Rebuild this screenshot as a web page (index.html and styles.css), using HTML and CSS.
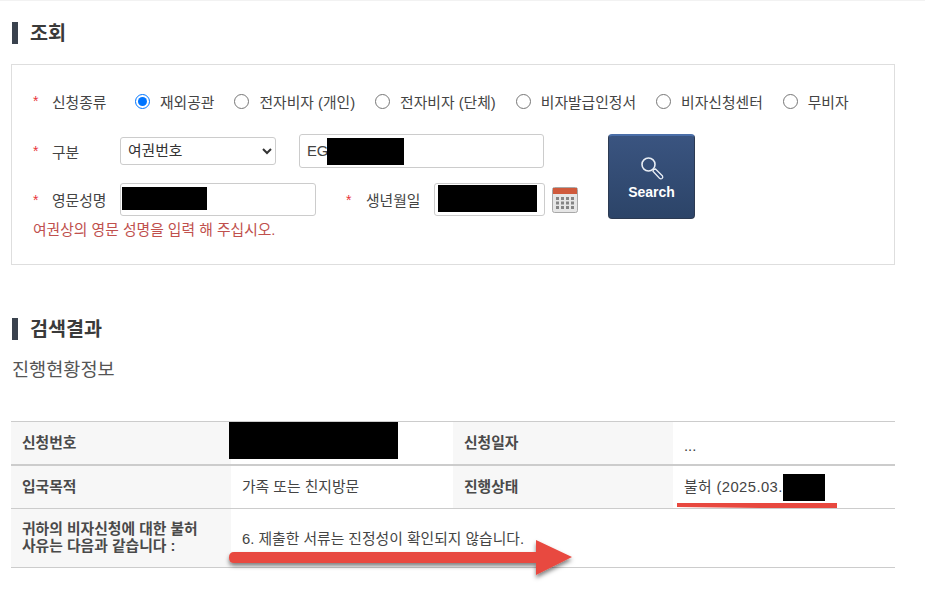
FILE: index.html
```html
<!DOCTYPE html>
<html lang="ko">

<head>
    <meta charset="UTF-8">
    <meta name="viewport" content="width=device-width, initial-scale=1.0">
    <title>조회</title>
    <link rel="stylesheet" href="styles.css">
</head>

<body>
    <div class="page">
        <h2 class="title">조회</h2>

        <div class="search-box">
            <div class="row-type">
                <span class="star">*</span>
                <span class="label">신청종류</span>
                <label class="radio"><input type="radio" name="kind" checked>재외공관</label>
                <label class="radio"><input type="radio" name="kind">전자비자 (개인)</label>
                <label class="radio"><input type="radio" name="kind">전자비자 (단체)</label>
                <label class="radio"><input type="radio" name="kind">비자발급인정서</label>
                <label class="radio"><input type="radio" name="kind">비자신청센터</label>
                <label class="radio"><input type="radio" name="kind">무비자</label>
            </div>

            <div class="search-body">
                <div class="search-fields">
                    <div class="row-gubun">
                        <span class="star">*</span>
                        <span class="label">구분</span>
                        <select class="select">
                            <option>여권번호</option>
                        </select>
                        <div class="field field-passport">
                            <input class="input" type="text" value="EG">
                            <span class="redact redact-passport"></span>
                        </div>
                    </div>
                    <div class="row-name">
                        <span class="star">*</span>
                        <span class="label">영문성명</span>
                        <div class="field field-name">
                            <input class="input" type="text">
                            <span class="redact redact-name"></span>
                        </div>
                        <span class="star star-birth">*</span>
                        <span class="label">생년월일</span>
                        <div class="field field-birth">
                            <input class="input" type="text">
                            <span class="redact redact-birth"></span>
                        </div>
                        <svg class="cal" width="26" height="26" viewBox="0 0 26 26">
                            <rect x="0.5" y="0.5" width="25" height="25" rx="2" fill="#e6e6e6" stroke="#a8a8a8" />
                            <rect x="1" y="1" width="24" height="6" fill="#cf5a3c" />
                            <g fill="#858585">
                                <rect x="4" y="10" width="3" height="3" />
                                <rect x="9" y="10" width="3" height="3" />
                                <rect x="14" y="10" width="3" height="3" />
                                <rect x="19" y="10" width="3" height="3" />
                                <rect x="4" y="14.5" width="3" height="3" />
                                <rect x="9" y="14.5" width="3" height="3" />
                                <rect x="14" y="14.5" width="3" height="3" />
                                <rect x="19" y="14.5" width="3" height="3" />
                                <rect x="4" y="19" width="3" height="3" />
                                <rect x="9" y="19" width="3" height="3" />
                                <rect x="14" y="19" width="3" height="3" />
                                <rect x="19" y="19" width="3" height="3" />
                            </g>
                        </svg>
                    </div>
                    <p class="hint">여권상의 영문 성명을 입력 해 주십시오.</p>
                </div>

                <button class="btn-search" type="button">
                    <svg width="26" height="26" viewBox="0 0 26 26">
                        <circle cx="9.5" cy="9.5" r="6.5" fill="none" stroke="#e8edf4" stroke-width="1.6" />
                        <path d="M14.5 14.5l2 -.5l7 7q.8 1.5 -.5 2.5q-1.2 .8 -2.5 -.2l-6.500 -7z" fill="#2f4a78" stroke="#e8edf4" stroke-width="1.300" />
                    </svg>
                    <span>Search</span>
                </button>
            </div>
        </div>

        <h2 class="title title-result">검색결과</h2>
        <h3 class="subtitle">진행현황정보</h3>

        <table class="result">
            <tr class="row-first">
                <th>신청번호</th>
                <td class="td-no"><span class="redact-no"></span></td>
                <th>신청일자</th>
                <td class="td-dots">...</td>
            </tr>
            <tr>
                <th>입국목적</th>
                <td>가족 또는 친지방문</td>
                <th>진행상태</th>
                <td class="td-status">불허 (2025.03.<span class="redact-status"></span></td>
            </tr>
            <tr class="row-reason">
                <th>귀하의 비자신청에 대한 불허<br>사유는 다음과 같습니다 :</th>
                <td colspan="3">6. 제출한 서류는 진정성이 확인되지 않습니다.</td>
            </tr>
        </table>

        <!-- 빨간 표시 -->
        <svg class="marks" width="925" height="616" viewBox="0 0 925 616">
            <defs>
                <filter id="shadow" x="-5%" y="-30%" width="110%" height="170%">
                    <feDropShadow dx="0" dy="3" stdDeviation="2" flood-color="#000" flood-opacity="0.5" />
                </filter>
            </defs>
            <path d="M677 503H837V508H760L677 507z" fill="#e8483f" />
            <path d="M234 552H536V540L572 557L536 575V563H234Q229 563 229 557.500Q229 552 234 552z" fill="#e8483f" filter="url(#shadow)" />
        </svg>
    </div>
</body>

</html>
```

FILE: styles.css
```css
* {
    box-sizing: border-box;
}

html,
body {
    margin: 0;
    padding: 0;
    background: #fff;
}

body {
    font-family: "Liberation Sans", "Noto Sans CJK KR", sans-serif;
    font-size: 14.8px;
    color: #444;
}

.page {
    position: relative;
    width: 925px;
    height: 616px;
    overflow: hidden;
    border-top: 1px solid #f2f2f2;
    padding: 21px 30px 0 12px;
}

.title {
    margin: 0;
    height: 22px;
    line-height: 22px;
    font-size: 19.6px;
    font-weight: 700;
    color: #3a3a3a;
    border-left: 6px solid #3a424e;
    padding-left: 12px;
}

.title-result {
    margin-top: 53px;
}

.subtitle {
    margin: 18px 0 0;
    line-height: 24px;
    font-size: 18.6px;
    font-weight: 400;
    color: #555;
}

/* 조회 박스 */
.search-box {
    height: 201px;
    width: 884px;
    margin-top: 20px;
    margin-left: -1px;
    border: 1px solid #dedede;
    padding: 25px 0 0 21px;
}

.star {
    width: 19px;
    color: #e8353a;
    font-size: 14px;
    line-height: 16px;
    flex: none;
}

.label {
    color: #444;
    white-space: nowrap;
}

.row-type {
    display: flex;
    align-items: center;
    height: 22px;
}

.row-type .label {
    width: 83px;
}

.radio {
    display: flex;
    align-items: center;
    gap: 10px;
    margin-right: 20px;
    white-space: nowrap;
    color: #444;
}

.radio input {
    margin: 0;
    width: 15px;
    height: 15px;
}

.search-body {
    display: flex;
    margin-top: 22px;
}

.search-fields {
    width: 575px;
}

.row-gubun,
.row-name {
    display: flex;
    align-items: center;
}

.row-gubun {
    height: 34px;
}

.row-gubun .label,
.row-name .label {
    width: 68px;
}

.row-name {
    height: 33px;
    margin-top: 15px;
}

.select {
    width: 156px;
    height: 28px;
    margin-right: 23px;
    border: 1px solid #ccc;
    border-radius: 3px;
    background: #fff;
    color: #333;
    font: inherit;
    padding-left: 3px;
}

.field {
    position: relative;
}

.input {
    display: block;
    width: 100%;
    height: 100%;
    border: 1px solid #ccc;
    border-radius: 3px;
    background: #fff;
    color: #444;
    font: inherit;
    padding: 0 7px;
}

.field-passport {
    width: 245px;
    height: 34px;
}

.field-name {
    width: 196px;
    height: 33px;
}

.star-birth {
    margin-left: 30px;
    width: 20px;
}

.field-birth {
    width: 111px;
    height: 33px;
}

.cal {
    margin-left: 7px;
    flex: none;
}

/* 가림 처리 */
.redact {
    position: absolute;
    background: #000;
}

.redact-passport {
    left: 28px;
    top: 4px;
    width: 77px;
    height: 27px;
}

.redact-name {
    left: 2px;
    top: 4px;
    width: 85px;
    height: 23px;
}

.redact-birth {
    left: 4px;
    top: 2px;
    width: 99px;
    height: 27px;
}

.redact-no {
    display: block;
    width: 169px;
    height: 37px;
    margin: 0 0 5px -2px;
    background: #000;
}

.redact-status {
    display: inline-block;
    width: 42px;
    height: 27px;
    vertical-align: -9px;
    background: #000;
}

.hint {
    margin: 4px 0 0;
    line-height: 20px;
    color: #c0504d;
}

.btn-search {
    width: 87px;
    height: 85px;
    flex: none;
    border: 1px solid #2c3a52;
    border-top: 2px solid #4a6ea8;
    border-radius: 4px;
    background: linear-gradient(#3a5480, #2c4468);
    color: #fff;
    font-family: inherit;
    font-size: 14px;
    font-weight: 700;
    display: flex;
    flex-direction: column;
    align-items: center;
    padding: 19px 0 0;
    cursor: pointer;
}

.btn-search svg {
    margin-bottom: 2px;
}

.btn-search span {
    line-height: 18px;
}

/* 결과 표 */
.result {
    width: 884px;
    margin: 39px 0 0 -1px;
    border-collapse: collapse;
    table-layout: fixed;
    border-top: 1px solid #ccc;
}

.result th,
.result td {
    border-bottom: 1px solid #ccc;
    height: 43px;
    text-align: left;
    vertical-align: middle;
    font-size: 14.8px;
    line-height: 17px;
    padding: 1px 11px 0;
    color: #444;
}

.result th {
    width: 220px;
    background: #f7f7f7;
    font-weight: 700;
    color: #4a4a4a;
}

.result td {
    width: 222px;
}

.result .row-first th,
.result .row-first td {
    height: 42px;
    border-bottom-width: 2px;
}

.result .td-no {
    padding: 0;
    vertical-align: top;
}

.result .td-dots {
    padding-top: 6px;
}

.td-status {
    letter-spacing: 0.4px;
}

.result .row-reason th,
.result .row-reason td {
    height: 59px;
}

.result .row-reason td {
    vertical-align: top;
    padding-top: 22px;
}

/* 표 위에 그린 빨간 표시 */
.marks {
    position: absolute;
    left: 0;
    top: -1px;
    pointer-events: none;
}
```
